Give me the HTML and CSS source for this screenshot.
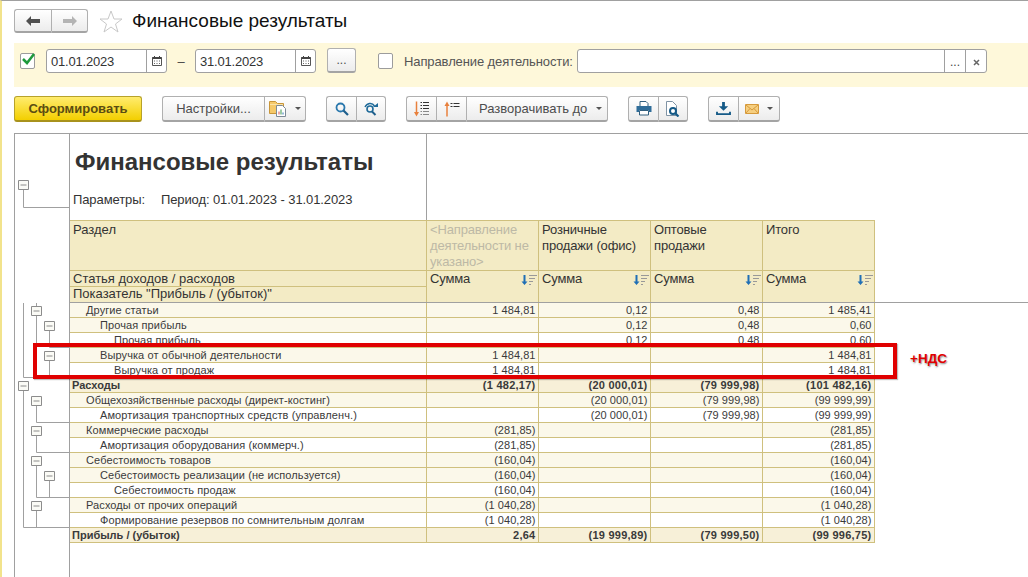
FILE: index.html
```html
<!DOCTYPE html>
<html lang="ru">
<head>
    <meta charset="UTF-8">
    <meta name="viewport" content="width=device-width, initial-scale=1.0">
    <title>Финансовые результаты</title>
    <link rel="stylesheet" href="styles.css">
</head>
<body>

    <!-- Shared icons -->
    <svg class="defs" width="0" height="0">
        <symbol id="icon-calendar" viewBox="0 0 12 12">
            <path d="M1.500 2.500h9v8h-9z" fill="#fff" stroke="#555"/>
            <path d="M1.500 2h9v2h-9zM3 1h1v2H3zM8 1h1v2H8z" fill="#444"/>
            <path d="M3 5.500h1v1H3zM5.500 5.500h1v1h-1zM8 5.500h1v1H8zM3 8h1v1H3zM5.500 8h1v1h-1zM8 8h1v1H8z" fill="#666"/>
        </symbol>
        <symbol id="icon-sort" viewBox="0 0 18 12">
            <path d="M3.500 1h2v6.500h2L4.500 11 1.500 7.500h2z" fill="#1f6fb5"/>
            <path d="M9 1.500h8M9 4.500h6M9 7.500h4M9 10.500h2" stroke="#999" fill="none"/>
        </symbol>
        <symbol id="icon-caret" viewBox="0 0 6 3">
            <path d="M0 0h6L3 3z" fill="#555"/>
        </symbol>
    </svg>

    <div class="page">
        <div class="topbar">
            <div class="btn-group nav-group">
                <button class="btn btn-icon">
                    <svg width="14" height="10" viewBox="0 0 14 10"><path d="M0 5l5-5v3h9v4H5v3z" fill="#505050"/></svg>
                </button>
                <button class="btn btn-icon">
                    <svg width="14" height="10" viewBox="0 0 14 10"><path d="M14 5L9 0v3H0v4h9v3z" fill="#b4b4b4"/></svg>
                </button>
            </div>
            <svg class="star" width="24" height="23" viewBox="0 0 24 23"><path d="M12 1l3 8h8l-6.500 5 2.500 8-7-5-7 5 2.500-8L1 9h8z" fill="#fff" stroke="#c8c8c8"/></svg>
            <h1 class="page-title">Финансовые результаты</h1>
        </div>

        <div class="filter-panel">
            <span class="check check-on">
                <svg width="15" height="13" viewBox="0 0 15 13"><path d="M2 6l4 4 7-9" fill="none" stroke="#1e9a3c" stroke-width="2.500"/></svg>
            </span>
            <div class="field date-field">
                <span class="field-text">01.01.2023</span>
                <span class="field-btn"><svg width="12" height="12"><use href="#icon-calendar"/></svg></span>
            </div>
            <span class="dash">–</span>
            <div class="field date-field">
                <span class="field-text">31.01.2023</span>
                <span class="field-btn"><svg width="12" height="12"><use href="#icon-calendar"/></svg></span>
            </div>
            <button class="btn more-btn">...</button>
            <span class="check direction-check"></span>
            <span class="filter-label">Направление деятельности:</span>
            <div class="field direction-field">
                <span class="field-text"></span>
                <span class="field-btn field-btn-small">...</span>
                <span class="field-btn field-btn-small">
                    <svg width="7" height="7" viewBox="0 0 7 7"><path d="M1 1l5 5M6 1L1 6" stroke="#666" stroke-width="1.500"/></svg>
                </span>
            </div>
        </div>

        <div class="toolbar">
            <button class="btn btn-primary">Сформировать</button>

            <div class="btn-group settings-group">
                <button class="btn btn-text settings-btn">Настройки...</button>
                <button class="btn btn-icon-menu settings-menu">
                    <svg width="18" height="17" viewBox="0 0 18 17">
                        <path d="M0.500 1.500h6l2 2h6v10h-14z" fill="#f5c96a" stroke="#c8963a"/>
                        <path d="M1 4.500h13" stroke="#fbe3a8"/>
                        <path d="M7.500 5.500h6l3 3v8h-9z" fill="#fff" stroke="#7d8a96"/>
                        <path d="M9.500 14.500v-3h1v3z" fill="#d9534f"/>
                        <path d="M11.500 14.500v-5h1v5z" fill="#3c9a4c"/>
                        <path d="M13.500 14.500v-2h1v2z" fill="#2f74b5"/>
                    </svg>
                    <svg class="caret" width="6" height="3"><use href="#icon-caret"/></svg>
                </button>
            </div>

            <div class="btn-group search-group">
                <button class="btn btn-icon">
                    <svg width="14" height="14" viewBox="0 0 14 14"><circle cx="5.500" cy="5.500" r="4" fill="none" stroke="#2a78ad" stroke-width="1.800"/><path d="M8.500 8.500l4.500 4.500" stroke="#1f5f8c" stroke-width="2.200"/></svg>
                </button>
                <button class="btn btn-icon">
                    <svg width="15" height="14" viewBox="0 0 15 14"><circle cx="6" cy="7" r="3" fill="none" stroke="#1f6a99" stroke-width="1.600"/><path d="M8 9.500l3.500 3.500" stroke="#1f5f8c" stroke-width="2"/><path d="M1 5c2-4 7-5 9.500-1" fill="none" stroke="#1f6a99" stroke-width="1.500"/><path d="M9 5h5V1z" fill="#1f6a99"/></svg>
                </button>
            </div>

            <div class="btn-group expand-group">
                <button class="btn btn-icon">
                    <svg width="16" height="16" viewBox="0 0 16 16">
                        <path d="M2.500 0.500V13" stroke="#e8803c" stroke-width="1.500"/>
                        <path d="M0 11H5L2.500 15.500z" fill="#e8803c"/>
                        <path d="M6.500 1h1.500v1H6.500zM9 1h6v1H9zM6.500 4h1.500v1H6.500zM9 4h6v1H9zM6.500 7h1.500v1H6.500zM9 7h6v1H9z" fill="#333"/>
                        <path d="M6.500 10h1.500v1H6.500zM9 10h6v1H9zM6.500 13h1.500v1H6.500zM9 13h6v1H9z" fill="#888"/>
                    </svg>
                </button>
                <button class="btn btn-icon">
                    <svg width="16" height="16" viewBox="0 0 16 16">
                        <path d="M3 4v11.500" stroke="#e8803c" stroke-width="1.500"/>
                        <path d="M0.500 5H5.500L3 0.500z" fill="#e8803c"/>
                        <path d="M6.500 2h2v1h-2zM9.500 2h6v1h-6zM6.500 5h2v1h-2zM9.500 5h6v1h-6z" fill="#333"/>
                    </svg>
                </button>
                <button class="btn btn-text expand-btn">Разворачивать до<svg class="caret" width="6" height="3"><use href="#icon-caret"/></svg></button>
            </div>

            <div class="btn-group print-group">
                <button class="btn btn-icon">
                    <svg width="16" height="15" viewBox="0 0 16 15">
                        <path d="M4 0.500h6l2 2v3H4z" fill="#fff" stroke="#33607f"/>
                        <path d="M0.500 5h15v6H13V9H3v2H0.500z" fill="#2f6d99"/>
                        <path d="M3.500 9.500h9v4.500h-9z" fill="#fff" stroke="#33607f"/>
                    </svg>
                </button>
                <button class="btn btn-icon">
                    <svg width="16" height="16" viewBox="0 0 16 16">
                        <path d="M1.500 0.500h6l4 4v10h-10z" fill="#fff" stroke="#7f93a5"/>
                        <circle cx="8" cy="10" r="3" fill="#fff" stroke="#155a87" stroke-width="2"/>
                        <path d="M10 12l3.500 3.500" stroke="#155a87" stroke-width="2.200"/>
                    </svg>
                </button>
            </div>

            <div class="btn-group save-group">
                <button class="btn btn-icon">
                    <svg width="15" height="13" viewBox="0 0 16 14">
                        <path d="M6.500 0h3v4.500H13L8 9.500 3 4.500h3.500z" fill="#155a87"/>
                        <path d="M0 10.500h2v1.500h12v-1.500h2V14H0z" fill="#155a87"/>
                    </svg>
                </button>
                <button class="btn btn-icon-menu save-menu">
                    <svg width="14" height="10" viewBox="0 0 14 10">
                        <path d="M0.500 0.500h13v9h-13z" fill="#f6cf80" stroke="#d69a3c"/>
                        <path d="M1 1l6 5 6-5M1 9l4-4.500M13 9L9 4.500" fill="none" stroke="#d69a3c"/>
                    </svg>
                    <svg class="caret" width="6" height="3"><use href="#icon-caret"/></svg>
                </button>
            </div>
        </div>

        <div class="report">
            <div class="tree-gutter">
                <!-- Grouping tree: viewBox starts at the gutter's place on the screen -->
                <svg class="tree" width="54" height="443" viewBox="15 134 54 443">
                    <g class="tree-lines">
                        <path d="M23.500 190V207.500H69"/>
                        <path d="M23.500 303V377.500H69"/>
                        <path d="M36.500 303V377.500"/>
                        <path d="M49.500 331V347.500H69"/>
                        <path d="M49.500 361V377.500"/>
                        <path d="M23.500 391V527.500H69"/>
                        <path d="M36.500 406V422.500H69"/>
                        <path d="M36.500 436V452.500H69"/>
                        <path d="M36.500 466V497.500H69"/>
                        <path d="M49.500 481V497.500"/>
                        <path d="M36.500 511V527.500"/>
                    </g>
                    <g class="tree-boxes">
                        <path d="M18.500 180.500h10v9h-10zM20.500 185h6"/>
                        <path d="M31.500 306.500h10v9h-10zM33.500 311h6"/>
                        <path d="M44.500 321.500h10v9h-10zM46.500 326h6"/>
                        <path d="M44.500 351.500h10v9h-10zM46.500 356h6"/>
                        <path d="M18.500 381.500h10v9h-10zM20.500 386h6"/>
                        <path d="M31.500 396.500h10v9h-10zM33.500 401h6"/>
                        <path d="M31.500 426.500h10v9h-10zM33.500 431h6"/>
                        <path d="M31.500 456.500h10v9h-10zM33.500 461h6"/>
                        <path d="M44.500 471.500h10v9h-10zM46.500 476h6"/>
                        <path d="M31.500 501.500h10v9h-10zM33.500 506h6"/>
                    </g>
                </svg>
            </div>

            <div class="sheet">
                <div class="sheet-head">
                    <div class="title-block">
                        <h2 class="report-title">Финансовые результаты</h2>
                        <div class="report-params">
                            <span>Параметры:</span>
                            <span>Период: 01.01.2023 - 31.01.2023</span>
                        </div>
                    </div>
                    <table class="report-table head-table">
                        <tr class="head-tall">
                            <th>Раздел</th>
                            <th class="muted">&lt;Направление деятельности не указано&gt;</th>
                            <th>Розничные продажи (офис)</th>
                            <th>Оптовые<br>продажи</th>
                            <th>Итого</th>
                        </tr>
                        <tr class="head-line">
                            <th>Статья доходов / расходов</th>
                            <th rowspan="2" class="sum-cell">Сумма<svg class="sort" width="18" height="12"><use href="#icon-sort"/></svg></th>
                            <th rowspan="2" class="sum-cell">Сумма<svg class="sort" width="18" height="12"><use href="#icon-sort"/></svg></th>
                            <th rowspan="2" class="sum-cell">Сумма<svg class="sort" width="18" height="12"><use href="#icon-sort"/></svg></th>
                            <th rowspan="2" class="sum-cell">Сумма<svg class="sort" width="18" height="12"><use href="#icon-sort"/></svg></th>
                        </tr>
                        <tr class="head-line head-last">
                            <th>Показатель "Прибыль / (убыток)"</th>
                        </tr>
                    </table>
                </div>

                <table class="report-table body-table">
                    <tr class="row-group"><td class="lvl-1">Другие статьи</td><td>1 484,81</td><td>0,12</td><td>0,48</td><td>1 485,41</td></tr>
                    <tr class="row-group"><td class="lvl-2">Прочая прибыль</td><td></td><td>0,12</td><td>0,48</td><td>0,60</td></tr>
                    <tr><td class="lvl-3">Прочая прибыль</td><td></td><td>0,12</td><td>0,48</td><td>0,60</td></tr>
                    <tr class="row-group"><td class="lvl-2">Выручка от обычной деятельности</td><td>1 484,81</td><td></td><td></td><td>1 484,81</td></tr>
                    <tr><td class="lvl-3">Выручка от продаж</td><td>1 484,81</td><td></td><td></td><td>1 484,81</td></tr>
                    <tr class="row-total"><td>Расходы</td><td>(1 482,17)</td><td>(20 000,01)</td><td>(79 999,98)</td><td>(101 482,16)</td></tr>
                    <tr class="row-group"><td class="lvl-1">Общехозяйственные расходы (директ-костинг)</td><td></td><td>(20 000,01)</td><td>(79 999,98)</td><td>(99 999,99)</td></tr>
                    <tr><td class="lvl-2">Амортизация транспортных средств (управленч.)</td><td></td><td>(20 000,01)</td><td>(79 999,98)</td><td>(99 999,99)</td></tr>
                    <tr class="row-group"><td class="lvl-1">Коммерческие расходы</td><td>(281,85)</td><td></td><td></td><td>(281,85)</td></tr>
                    <tr><td class="lvl-2">Амортизация оборудования (коммерч.)</td><td>(281,85)</td><td></td><td></td><td>(281,85)</td></tr>
                    <tr class="row-group"><td class="lvl-1">Себестоимость товаров</td><td>(160,04)</td><td></td><td></td><td>(160,04)</td></tr>
                    <tr class="row-group"><td class="lvl-2">Себестоимость реализации (не используется)</td><td>(160,04)</td><td></td><td></td><td>(160,04)</td></tr>
                    <tr><td class="lvl-3">Себестоимость продаж</td><td>(160,04)</td><td></td><td></td><td>(160,04)</td></tr>
                    <tr class="row-group"><td class="lvl-1">Расходы от прочих операций</td><td>(1 040,28)</td><td></td><td></td><td>(1 040,28)</td></tr>
                    <tr><td class="lvl-2">Формирование резервов по сомнительным долгам</td><td>(1 040,28)</td><td></td><td></td><td>(1 040,28)</td></tr>
                    <tr class="row-total"><td>Прибыль / (убыток)</td><td>2,64</td><td>(19 999,89)</td><td>(79 999,50)</td><td>(99 996,75)</td></tr>
                </table>
            </div>

            <!-- Red annotation over the report -->
            <div class="callout"></div>
            <div class="callout-note">+НДС</div>
        </div>
    </div>

</body>
</html>
```

FILE: styles.css
```css
/* Basic Reset */
* {
    margin: 0;
    padding: 0;
    box-sizing: border-box;
}

body {
    font-family: 'Liberation Sans', Arial, sans-serif;
    background: #fff;
    color: #333;
    height: 577px;
    overflow: hidden;
}

.defs {
    position: absolute;
}

/* Page frame */
.page {
    height: 577px;
    border-top: 1px solid #a0a0a0;
    border-left: 2px solid #f2e38c;
    padding-left: 12px;
    overflow: hidden;
}

/* Title row */
.topbar {
    display: flex;
    align-items: center;
    height: 42px;
    padding-top: 8px;
    padding-bottom: 10px;
}

.star {
    margin-left: 11px;
}

.page-title {
    margin-left: 9px;
    font-size: 19px;
    font-weight: normal;
    color: #111;
}

/* Buttons */
.btn {
    font-family: inherit;
    font-size: 13px;
    color: #4d4d4d;
    background: linear-gradient(#fff, #ececec);
    border: 1px solid #b0b0b0;
    border-bottom: 2px solid #a4a4a4;
    border-radius: 3px;
    display: flex;
    align-items: center;
    justify-content: center;
}

.btn-group {
    display: flex;
}

.btn-group .btn {
    border-radius: 0;
    border-right: none;
}

.btn-group .btn:first-child {
    border-radius: 3px 0 0 3px;
}

.btn-group .btn:last-child {
    border-radius: 0 3px 3px 0;
    border-right: 1px solid #b0b0b0;
}

.btn-icon {
    width: 30px;
}

.btn-icon-menu {
    gap: 8px;
}

.caret {
    flex: none;
}

.nav-group {
    height: 24px;
}

.nav-group .btn-icon {
    width: 37px;
}

/* Filter panel */
.filter-panel {
    display: flex;
    align-items: flex-start;
    height: 44px;
    padding: 6px 0 0 6px;
    background: #fef8da;
}

.check {
    width: 15px;
    height: 16px;
    margin-top: 4px;
    background: #fff;
    border: 1px solid #9c9c9c;
    border-radius: 2px;
    flex: none;
}

.check-on svg {
    display: block;
    margin: -1px 0 0 0;
}

.field {
    display: flex;
    height: 24px;
    margin-left: 11px;
    background: #fff;
    border: 1px solid #a0a0a0;
    border-radius: 3px;
    font-size: 13px;
    color: #333;
}

.field-text {
    flex: 1;
    padding-left: 4px;
    line-height: 23px;
    letter-spacing: -0.2px;
}

.field-btn {
    width: 20px;
    border-left: 1px solid #a0a0a0;
    display: flex;
    align-items: center;
    justify-content: center;
}

.date-field {
    width: 121px;
}

.dash + .date-field {
    margin-left: 0;
}

.dash {
    width: 28px;
    text-align: center;
    font-size: 13px;
    line-height: 25px;
    color: #444;
}

.more-btn {
    width: 29px;
    height: 25px;
    margin: -1px 0 0 11px;
    font-size: 12px;
}

.direction-check {
    margin-left: 22px;
}

.filter-label {
    margin-left: 11px;
    font-size: 13px;
    line-height: 25px;
    letter-spacing: -0.1px;
    color: #555;
    width: 162px;
    white-space: nowrap;
}

.direction-field {
    width: 410px;
    margin-left: 11px;
}

.field-btn-small {
    width: 21px;
    font-size: 12px;
    color: #444;
    padding-top: 2px;
}

/* Toolbar */
.toolbar {
    display: flex;
    height: 26px;
    margin-top: 9px;
}

.btn-primary {
    width: 128px;
    font-size: 13px;
    font-weight: bold;
    color: #5a4c12;
    background: linear-gradient(#ffec6e, #f3cf00);
    border-color: #b7a22a;
    border-bottom-color: #a8921c;
}

.settings-group {
    margin-left: 20px;
}

.settings-btn {
    width: 102px;
}

.settings-menu {
    width: 42px;
}

.search-group,
.expand-group,
.print-group,
.save-group {
    margin-left: 20px;
}

.expand-btn {
    width: 142px;
    gap: 9px;
    padding-left: 12px;
    justify-content: flex-start;
    white-space: nowrap;
}

.save-menu {
    width: 42px;
}

/* Report area */
.report {
    position: relative;
    display: flex;
    height: 444px;
    margin-top: 11px;
    border-top: 1px solid #a0a0a0;
    border-left: 1px solid #a0a0a0;
}

.tree-gutter {
    width: 54px;
    flex: none;
}

.tree {
    display: block;
}

.tree-lines path {
    fill: none;
    stroke: #a0a0a0;
}

.tree-boxes path {
    fill: #fbfbf6;
    stroke: #8c8c8c;
}

.sheet {
    flex: 1;
    border-left: 1px solid #a0a0a0;
}

.sheet-head {
    border-bottom: 1px solid #a0a0a0;
}

.title-block {
    width: 357px;
    height: 86px;
    border-right: 1px solid #a0a0a0;
    padding: 14px 0 0 5px;
}

.report-title {
    font-size: 24px;
    line-height: 28px;
    color: #333;
}

.report-params {
    display: flex;
    gap: 16px;
    margin: 16px 0 0 -2px;
    font-size: 13px;
    line-height: 16px;
    letter-spacing: -0.1px;
}

/* Report table */
.report-table {
    border-collapse: collapse;
    table-layout: fixed;
    width: 804px;
    font-size: 11px;
}

.report-table th,
.report-table td {
    border: 1px solid #cfc07e;
    overflow: hidden;
    white-space: nowrap;
}

.report-table tr > * {
    width: 112px;
}

.report-table tr > :first-child {
    border-left: none;
    width: 356px;
}

/* Header cells */
.head-table th {
    background: #f3ebc5;
    font-size: 13px;
    font-weight: normal;
    text-align: left;
    vertical-align: top;
    padding: 1px 3px 0 3.500px;
    line-height: 16px;
    letter-spacing: -0.15px;
    white-space: normal;
    color: #333;
}

.head-table tr > :first-child {
    padding-left: 3px;
    letter-spacing: 0;
}

.head-table th[rowspan] {
    border-bottom: none;
}

.head-tall th {
    height: 49px;
}

.head-line th {
    height: 16px;
    line-height: 15px;
    padding-top: 0;
}

.head-last th {
    height: 15px;
    line-height: 14px;
    border-bottom: none;
}

.head-table .muted {
    color: #bdb9a6;
}

.sum-cell {
    position: relative;
}

.sort {
    position: absolute;
    right: 0;
    top: 3px;
}

/* Body rows */
.body-table {
    color: #3a3a3a;
}

.body-table tr:first-child td {
    border-top: none;
}

.body-table td {
    height: 15px;
    line-height: 14px;
    padding: 0 2px;
    text-align: right;
    letter-spacing: 0.05px;
}

.body-table td:first-child {
    text-align: left;
    letter-spacing: 0.1px;
}

.row-group td {
    background: #fbf8ea;
}

.row-total td {
    background: #f7f0d8;
    font-weight: bold;
    letter-spacing: 0.25px;
}

.row-total td:first-child {
    letter-spacing: 0;
}

.body-table .lvl-1 {
    padding-left: 16px;
}

.body-table .lvl-2 {
    padding-left: 30px;
}

.body-table .lvl-3 {
    padding-left: 44px;
}

/* Annotation */
.callout {
    position: absolute;
    left: 18px;
    top: 209px;
    width: 864px;
    height: 36px;
    border: 4px solid #e00000;
    box-shadow: 1px 1px 1px rgba(0, 0, 0, 0.25);
}

.callout-note {
    position: absolute;
    left: 895px;
    top: 217px;
    font-size: 13.500px;
    font-weight: bold;
    color: #e00000;
    text-shadow: 1px 1px 1px rgba(0, 0, 0, 0.3), 0 2px 2px rgba(0, 0, 0, 0.15);
}
```
